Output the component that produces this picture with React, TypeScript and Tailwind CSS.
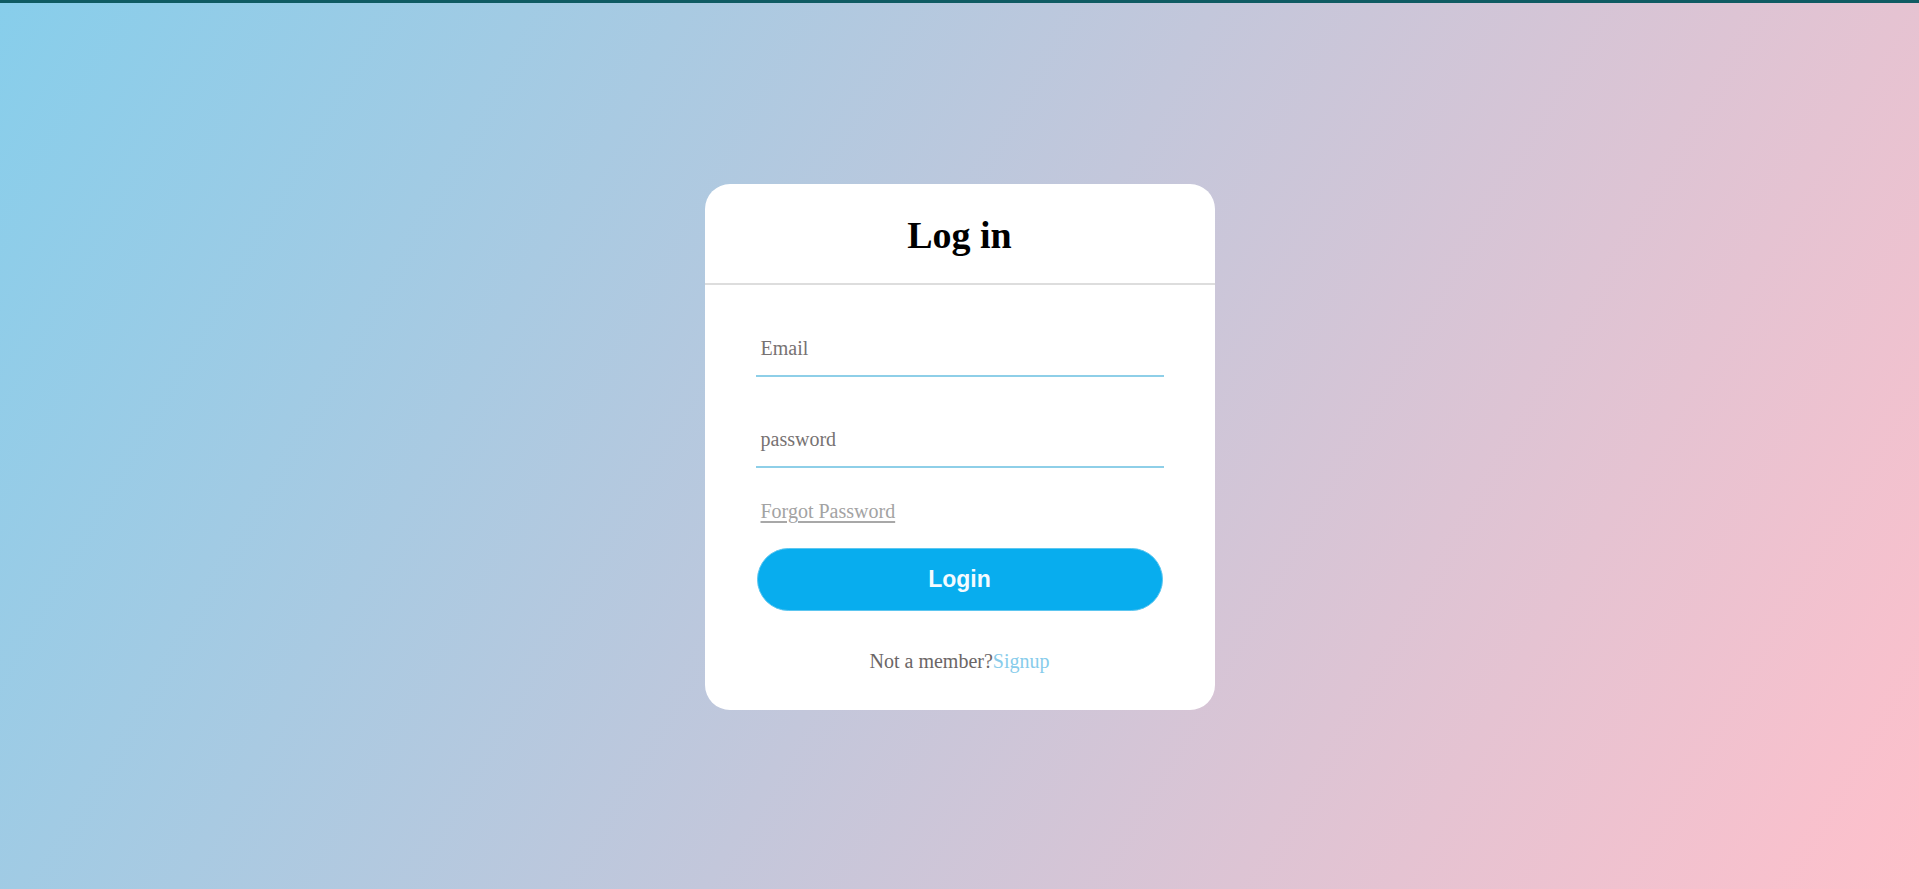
import React from "react";

export default function App() {
  return (
    <div
      className="w-full h-screen flex flex-col overflow-hidden"
      style={{ background: "linear-gradient(120deg, #87ceeb, #ffc0cb)" }}
    >
      <div className="h-[3px] w-full bg-[#0f5b63] shrink-0" />
      <div className="flex-1 flex items-start justify-center pt-[181px]">
        <div className="w-[510px] bg-white rounded-[25px] flex flex-col font-['Liberation_Serif',serif]">
          <div className="h-[99px] flex items-center justify-center pt-[2px]">
            <h1 className="text-[38px] leading-none font-bold text-black">Log in</h1>
          </div>
          <div className="h-[2px] bg-[#dddddd]" />
          <div className="px-[51px] pt-[36px] pb-[37px] flex flex-col">
            <div className="h-[56px] border-b-2 border-[#8ecfe8] flex items-center pl-[5px] text-[20px] text-[#777272]">
              Email
            </div>
            <div className="mt-[35px] h-[56px] border-b-2 border-[#8ecfe8] flex items-center pl-[5px] text-[20px] text-[#777272]">
              password
            </div>
            <div className="mt-[31px] h-[24px] flex items-center pl-[5px]">
              <span className="text-[20px] text-[#a3a3a3] underline decoration-[#a8a8a8] underline-offset-[3px]">
                Forgot Password
              </span>
            </div>
            <button className="mt-[25px] mx-[1px] h-[63px] rounded-full bg-[#08adee] border border-[#5cc6f0] flex items-center justify-center text-[#f4fbff] text-[23px] font-bold font-['Liberation_Sans',sans-serif]">
              Login
            </button>
            <div className="mt-[38px] h-[24px] flex items-center justify-center text-[20px] text-[#6b6666]">
              <span>Not a member?</span>
              <span className="text-[#87cceb]">Signup</span>
            </div>
          </div>
        </div>
      </div>
    </div>
  );
}
